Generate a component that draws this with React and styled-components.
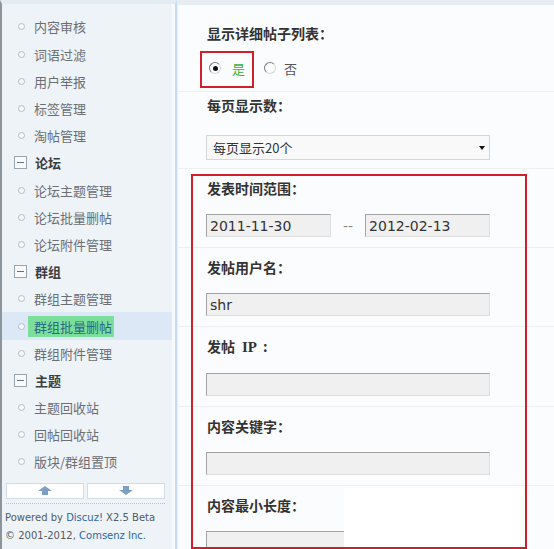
import styled, { createGlobalStyle } from "styled-components";

const GlobalStyle = createGlobalStyle`
  html, body {
    margin: 0;
    padding: 0;
    background: #ffffff;
    overflow: hidden;
  }
`;

const CJK = `"Noto Sans CJK SC", "Noto Sans", sans-serif`;

const menu = [
  { type: "item", label: "内容审核" },
  { type: "item", label: "词语过滤" },
  { type: "item", label: "用户举报" },
  { type: "item", label: "标签管理" },
  { type: "item", label: "淘帖管理" },
  { type: "group", label: "论坛" },
  { type: "item", label: "论坛主题管理" },
  { type: "item", label: "论坛批量删帖" },
  { type: "item", label: "论坛附件管理" },
  { type: "group", label: "群组" },
  { type: "item", label: "群组主题管理" },
  { type: "item", label: "群组批量删帖", active: true },
  { type: "item", label: "群组附件管理" },
  { type: "group", label: "主题" },
  { type: "item", label: "主题回收站" },
  { type: "item", label: "回帖回收站" },
  { type: "item", label: "版块/群组置顶" },
];

const App = () => {
  return (
    <Page>
      <GlobalStyle />
      <Sidebar>
        <Menu>
          {menu.map((m, i) =>
            m.type === "group" ? (
              <GroupRow key={i}>
                <Collapse />
                {m.label}
              </GroupRow>
            ) : (
              <ItemRow key={i} $active={m.active}>
                <Bullet />
                <ItemText $active={m.active}>{m.label}</ItemText>
              </ItemRow>
            )
          )}
        </Menu>
        <ScrollButtons>
          <ScrollBtn>
            <svg width="14" height="9" viewBox="0 0 14 9">
              <polygon points="7,0 14,5 10,5 10,9 4,9 4,5 0,5" fill="#7d9fc2" />
            </svg>
          </ScrollBtn>
          <ScrollBtn>
            <svg width="14" height="9" viewBox="0 0 14 9">
              <polygon points="7,9 14,4 10,4 10,0 4,0 4,4 0,4" fill="#7d9fc2" />
            </svg>
          </ScrollBtn>
        </ScrollButtons>
        <Copyright>
          <div>
            Powered by <Brand>Discuz!</Brand> X2.5 Beta
          </div>
          <div>
            © 2001-2012, <Brand>Comsenz Inc.</Brand>
          </div>
        </Copyright>
      </Sidebar>

      <Main>
        <Field $top={18} $gap={15} $bottom={13}>
          <Label>显示详细帖子列表：</Label>
          <RadioGroup>
            <Radio $checked />
            <RadioText $checked>是</RadioText>
            <Radio />
            <RadioText>否</RadioText>
          </RadioGroup>
        </Field>
        <Field $top={3} $gap={20} $bottom={8}>
          <Label>每页显示数：</Label>
          <Select>
            每页显示20个
            <Caret />
          </Select>
        </Field>
        <Field>
          <Label>发表时间范围：</Label>
          <DateRow>
            <TextBox $width={125}>2011-11-30</TextBox>
            <Dash>--</Dash>
            <TextBox $width={125}>2012-02-13</TextBox>
          </DateRow>
        </Field>
        <Field>
          <Label>发帖用户名：</Label>
          <TextBox>shr</TextBox>
        </Field>
        <Field>
          <Label>
            发帖<Latin>IP</Latin>:
          </Label>
          <TextBox />
        </Field>
        <Field>
          <Label>内容关键字：</Label>
          <TextBox />
        </Field>
        <Field>
          <Label>内容最小长度：</Label>
          <TextBox />
        </Field>
      </Main>

      <Highlight $left={200} $top={51} $width={54} $height={37} />
      <Highlight $left={191} $top={174} $width={336} $height={375} />
      <Patch />
    </Page>
  );
};

const Page = styled.div`
  position: relative;
  display: flex;
  width: 554px;
  height: 549px;
  overflow: hidden;
`;

const Sidebar = styled.aside`
  width: 177px;
  flex-shrink: 0;
  box-sizing: border-box;
  display: flex;
  flex-direction: column;
  background: #eef3f8;
  border-left: 2px solid #8c949c;
  border-right: 2px solid #c7daee;
  border-top: 4px solid #e3ebf3;
  box-shadow: inset -3px 0 0 #f7fafc;
`;

const Menu = styled.ul`
  list-style: none;
  margin: 0;
  padding: 9.4px 0 0;
`;

const ItemRow = styled.li`
  display: flex;
  align-items: center;
  height: 27.2px;
  padding-left: 16px;
  margin-right: 3px;
  background: ${(p) => (p.$active ? "#dce8f5" : "transparent")};
`;

const Bullet = styled.span`
  width: 5px;
  height: 5px;
  border-radius: 50%;
  border: 1px solid #b3bcc6;
  background: #f7f9fb;
  margin-right: 9px;
`;

const ItemText = styled.span`
  font-family: ${CJK};
  font-size: 13px;
  line-height: 21px;
  color: ${(p) => (p.$active ? "#2a6886" : "#6b6f74")};
  background: ${(p) => (p.$active ? "#7bdf9b" : "transparent")};
  padding: 0 ${(p) => (p.$active ? "2px" : "0")} 0 ${(p) => (p.$active ? "6px" : "0")};
  margin-left: ${(p) => (p.$active ? "-6px" : "0")};
`;

const GroupRow = styled.li`
  display: flex;
  align-items: center;
  height: 27.2px;
  padding-left: 12px;
  font-family: ${CJK};
  font-size: 13px;
  font-weight: 700;
  color: #3a3d40;
`;

const Collapse = styled.span`
  position: relative;
  width: 11px;
  height: 11px;
  margin-right: 8px;
  border: 1px solid #9aa4af;
  background: #f8fafc;
  &::after {
    content: "";
    position: absolute;
    left: 2px;
    right: 2px;
    top: 5px;
    height: 1px;
    background: #6a747e;
  }
`;

const ScrollButtons = styled.div`
  display: flex;
  gap: 3px;
  margin: 7px 10px 0 4px;
  padding-bottom: 4px;
  border-bottom: 1px dotted #b9c2cc;
`;

const ScrollBtn = styled.div`
  flex: 1;
  height: 14px;
  display: flex;
  align-items: center;
  justify-content: center;
  background: #ffffff;
  border: 1px solid #d3dce6;
`;

const Copyright = styled.div`
  padding: 5px 0 0 3px;
  font-family: "DejaVu Sans", Verdana, sans-serif;
  font-size: 10px;
  line-height: 18px;
  color: #555a60;
  white-space: nowrap;
`;

const Brand = styled.span`
  color: #2f64a3;
`;

const Main = styled.main`
  flex: 1;
  box-sizing: border-box;
  background: #fbfcfd;
  border-top: 5px solid #e6ecf1;
  border-left: 1px solid #e9eef3;
`;

const Field = styled.div`
  display: flex;
  flex-direction: column;
  align-items: flex-start;
  gap: ${(p) => p.$gap ?? 16}px;
  padding: ${(p) => p.$top ?? 9}px 0 ${(p) => p.$bottom ?? 10}px 28px;
  border-bottom: 1px solid #edf0f3;
`;

const Label = styled.div`
  padding-left: 1px;
  font-family: ${CJK};
  font-size: 14px;
  font-weight: 700;
  line-height: 20px;
  color: #333;
`;

const Latin = styled.span`
  font-family: "Liberation Serif", serif;
  font-size: 15px;
  margin: 0 6px 0 7px;
`;

const RadioGroup = styled.div`
  display: flex;
  align-items: center;
  height: 20px;
  padding-left: 3px;
`;

const Radio = styled.span`
  position: relative;
  box-sizing: border-box;
  width: 12px;
  height: 12px;
  border-radius: 50%;
  border: 1px solid;
  border-color: #7b7b7b #d6d6d6 #d6d6d6 #7b7b7b;
  background: #fdfdfd;
  &::after {
    content: "";
    display: ${(p) => (p.$checked ? "block" : "none")};
    position: absolute;
    left: 2.5px;
    top: 2.5px;
    width: 5px;
    height: 5px;
    border-radius: 50%;
    background: #111;
  }
`;

const RadioText = styled.span`
  font-family: ${CJK};
  font-size: 13px;
  color: ${(p) => (p.$checked ? "#35b535" : "#555")};
  margin: 0 19px 0 ${(p) => (p.$checked ? "11px" : "8px")};
`;

const Select = styled.div`
  box-sizing: border-box;
  width: 284px;
  height: 25px;
  display: flex;
  align-items: center;
  justify-content: space-between;
  padding: 0 4px 0 6px;
  background: #f9f9f9;
  border: 1px solid #d6d6d6;
  font-family: ${CJK};
  font-size: 13px;
  color: #333;
`;

const Caret = styled.span`
  width: 0;
  height: 0;
  border-left: 3.5px solid transparent;
  border-right: 3.5px solid transparent;
  border-top: 4px solid #111;
`;

const DateRow = styled.div`
  display: flex;
  align-items: center;
`;

const Dash = styled.span`
  margin: 0 12px;
  font-family: "DejaVu Sans", sans-serif;
  font-size: 14px;
  color: #888;
`;

const TextBox = styled.div`
  box-sizing: border-box;
  width: ${(p) => p.$width ?? 284}px;
  height: 23px;
  padding-left: 3px;
  display: flex;
  align-items: center;
  border: 1px solid;
  border-color: #a3a3a3 #dedede #dedede #a3a3a3;
  background: #f0f0f0;
  font-family: "DejaVu Sans", sans-serif;
  font-size: 14px;
  color: #333;
`;

const Highlight = styled.div`
  position: absolute;
  left: ${(p) => p.$left}px;
  top: ${(p) => p.$top}px;
  width: ${(p) => p.$width}px;
  height: ${(p) => p.$height}px;
  box-sizing: border-box;
  border: 2px solid #cf1f2a;
  pointer-events: none;
`;

const Patch = styled.div`
  position: absolute;
  left: 344px;
  top: 486px;
  width: 180px;
  height: 61px;
  background: #ffffff;
`;

export default App;
